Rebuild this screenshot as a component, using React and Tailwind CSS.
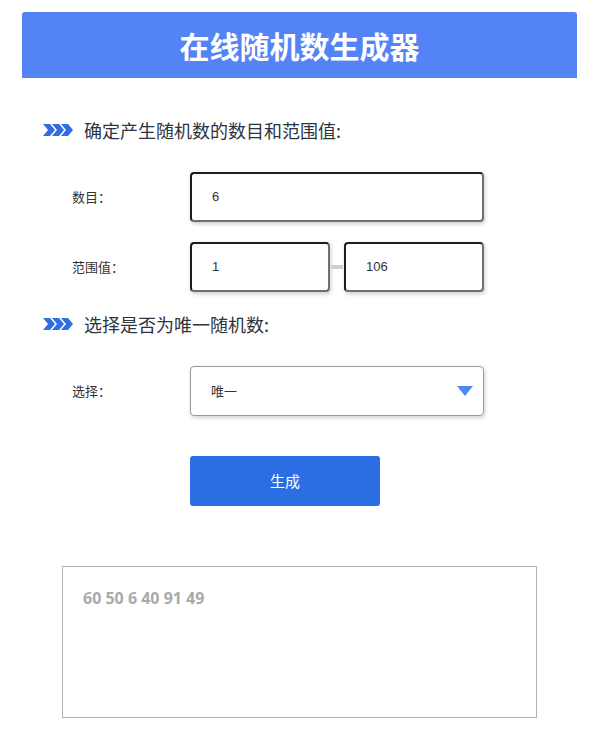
import { useState } from "react";

function Chevrons() {
    return (
        <svg width="32" height="14" viewBox="0 0 32 14" className="shrink-0">
            <path d="M1 1 L8 1 L13 7 L8 13 L1 13 L6 7 Z" fill="#2f6fe0" />
            <path d="M10 1 L17 1 L22 7 L17 13 L10 13 L15 7 Z" fill="#2f6fe0" />
            <path d="M19 1 L26 1 L31 7 L26 13 L19 13 L24 7 Z" fill="#2f6fe0" />
        </svg>
    );
}

function SectionTitle({ children }) {
    return (
        <div className="flex items-center gap-[10px] pl-[20px] h-[26px]">
            <Chevrons />
            <span className="text-[18px] text-[#2c3440]">{children}</span>
        </div>
    );
}

const insetBox =
    "h-[50px] rounded-[4px] border-2 border-t-[#1e1e1e] border-l-[#1e1e1e] border-b-[#6f6f6f] border-r-[#6f6f6f] bg-white shadow-[1px_2px_4px_rgba(0,0,0,0.2)] pl-[20px] flex items-center text-[13px] text-[#333] font-['Liberation_Sans','Noto_Sans_CJK_SC',sans-serif]";

export default function App() {
    const [result] = useState("60 50 6 40 91 49");

    return (
        <div className="bg-white min-h-[741px] pt-[12px] font-['Noto_Sans_CJK_SC',sans-serif]">
            <div className="ml-[22px] w-[555px]">
                <div className="h-[66px] bg-[#5383f5] rounded-t-[3px] flex items-center justify-center">
                    <h1 className="text-[30px] font-bold text-white">在线随机数生成器</h1>
                </div>

                <div className="mt-[39px]">
                    <SectionTitle>确定产生随机数的数目和范围值:</SectionTitle>
                </div>

                <div className="mt-[29px] flex items-center">
                    <label className="w-[168px] pl-[50px] text-[13px] text-[#333]">数目：</label>
                    <div className={`${insetBox} w-[294px]`}>6</div>
                </div>

                <div className="mt-[20px] flex items-center">
                    <label className="w-[168px] pl-[50px] text-[13px] text-[#333]">范围值：</label>
                    <div className={`${insetBox} w-[140px]`}>1</div>
                    <div className="w-[14px] flex justify-center">
                        <div className="w-[12px] h-[4px] bg-[#cfcfcf]" />
                    </div>
                    <div className={`${insetBox} w-[140px]`}>106</div>
                </div>

                <div className="mt-[19px]">
                    <SectionTitle>选择是否为唯一随机数:</SectionTitle>
                </div>

                <div className="mt-[29px] flex items-center">
                    <label className="w-[168px] pl-[50px] text-[13px] text-[#333]">选择：</label>
                    <div className="w-[294px] h-[50px] rounded-[4px] border border-[#9a9a9a] bg-white shadow-[1px_2px_4px_rgba(0,0,0,0.18)] pl-[20px] pr-[10px] flex items-center justify-between text-[13px] text-[#333]">
                        <span>唯一</span>
                        <svg width="16" height="10" viewBox="0 0 16 10">
                            <path d="M0 0 L16 0 L8 10 Z" fill="#4a8af5" />
                        </svg>
                    </div>
                </div>

                <div className="mt-[40px] pl-[168px]">
                    <button className="w-[190px] h-[50px] rounded-[3px] bg-[#2b6de2] text-white text-[15px]">生成</button>
                </div>

                <div className="mt-[60px] ml-[40px] w-[475px] h-[152px] border border-[#b3b3b3] px-[20px] pt-[19px]">
                    <p className="text-[16px] font-bold text-[#aaaaaa] font-['Open_Sans',sans-serif]">{result}</p>
                </div>
            </div>
        </div>
    );
}
